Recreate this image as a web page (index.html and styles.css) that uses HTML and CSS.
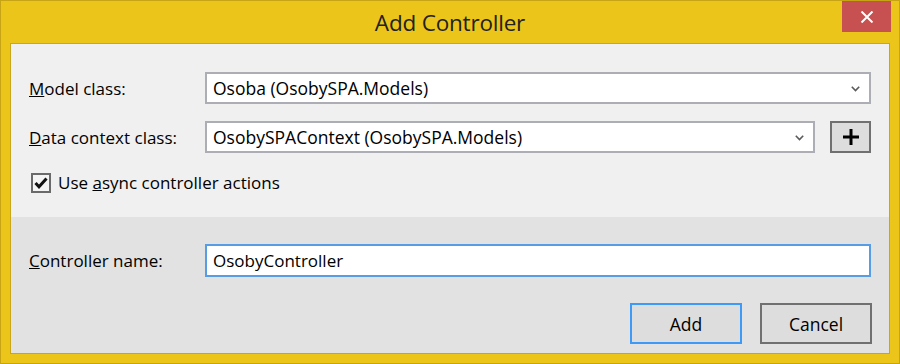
FILE: index.html
```html
<!DOCTYPE html>
<html lang="en">
<head>
    <meta charset="UTF-8">
    <title>Add Controller</title>
    <link rel="stylesheet" href="styles.css">
</head>
<body>
    <div class="window">
        <div class="titlebar">
            <span></span>
            <h1 class="title">Add Controller</h1>
            <button class="close" title="Close">
                <svg width="14" height="12" viewBox="0 0 14 12">
                    <path d="M1.5 0.5 L12.5 11.5 M12.5 0.5 L1.5 11.5" stroke="#fff" stroke-width="2" fill="none"/>
                </svg>
            </button>
        </div>
        <div class="content">
            <section class="options">
                <div class="row">
                    <label class="label"><u>M</u>odel class:</label>
                    <div class="combo combo-wide">
                        <span>Osoba (OsobySPA.Models)</span>
                        <svg class="chevron" width="9" height="6" viewBox="0 0 9 6">
                            <path d="M0.8 0.8 L4.5 4.5 L8.2 0.8" stroke="#5a5a5a" stroke-width="1.6" fill="none"/>
                        </svg>
                    </div>
                </div>
                <div class="row">
                    <label class="label"><u>D</u>ata context class:</label>
                    <div class="combo">
                        <span>OsobySPAContext (OsobySPA.Models)</span>
                        <svg class="chevron" width="9" height="6" viewBox="0 0 9 6">
                            <path d="M0.8 0.8 L4.5 4.5 L8.2 0.8" stroke="#5a5a5a" stroke-width="1.6" fill="none"/>
                        </svg>
                    </div>
                    <button class="plus" title="New data context">
                        <svg width="16" height="16" viewBox="0 0 16 16">
                            <path d="M8 0 V16 M0 8 H16" stroke="#000" stroke-width="3" fill="none"/>
                        </svg>
                    </button>
                </div>
                <label class="check">
                    <span class="box">
                        <svg width="14" height="12" viewBox="0 0 14 12">
                            <path d="M1.5 6 L5 9.8 L12.5 1.5" stroke="#111" stroke-width="3" fill="none"/>
                        </svg>
                    </span>
                    <span>Use <u>a</u>sync controller actions</span>
                </label>
            </section>
            <section class="naming">
                <div class="row">
                    <label class="label" for="controllerName"><u>C</u>ontroller name:</label>
                    <input type="text" id="controllerName" class="name-input" value="OsobyController">
                </div>
                <div class="actions">
                    <button class="btn btn-default">Add</button>
                    <button class="btn">Cancel</button>
                </div>
            </section>
        </div>
    </div>
</body>
</html>
```

FILE: styles.css
```css
body {
    margin: 0;
    font-family: 'Open Sans', 'Noto Sans', sans-serif;
    background-color: #ecc51a;
}
.window {
    width: 900px;
    height: 364px;
    box-sizing: border-box;
    border: 1px solid #c6a416;
    background-color: #ecc51a;
    display: flex;
    flex-direction: column;
}
.titlebar {
    height: 42px;
    display: grid;
    grid-template-columns: 1fr auto 1fr;
    flex-shrink: 0;
}
.title {
    margin: 0;
    font-size: 22.5px;
    font-weight: normal;
    color: #222;
    line-height: 44px;
    letter-spacing: -0.2px;
}
.close {
    justify-self: end;
    align-self: start;
    width: 49px;
    height: 31px;
    margin-right: 8px;
    border: none;
    padding: 0;
    background-color: #c75050;
    display: flex;
    align-items: center;
    justify-content: center;
}
.content {
    flex: 1;
    margin: 0 9px 9px;
    border: 1px solid #c9a71c;
    display: flex;
    flex-direction: column;
}
.options {
    height: 173px;
    box-sizing: border-box;
    padding: 28px 17px 0 18px;
    background-color: #f0f0f0;
    display: flex;
    flex-direction: column;
    gap: 17px;
}
.naming {
    flex: 1;
    padding: 27px 17px 0 18px;
    background-color: #e2e2e2;
}
.row {
    display: flex;
    align-items: center;
}
.label {
    flex: 0 0 176px;
    font-size: 17px;
    color: #000;
}
.combo {
    width: 610px;
    height: 32px;
    box-sizing: border-box;
    border: 2px solid #adadb5;
    background-color: #fff;
    padding: 0 9px 0 6px;
    display: flex;
    align-items: center;
    justify-content: space-between;
    font-size: 17.5px;
    color: #000;
}
.combo-wide {
    width: 666px;
}
.chevron {
    margin-top: 1px;
}
.plus {
    width: 41px;
    height: 32px;
    margin-left: 15px;
    box-sizing: border-box;
    border: 2px solid #707070;
    background-color: #dddddd;
    padding: 0;
    display: flex;
    align-items: center;
    justify-content: center;
}
.check {
    display: flex;
    align-items: center;
    gap: 7px;
    margin-top: 1px;
    padding-left: 2px;
    font-size: 17px;
    color: #000;
}
.box {
    width: 20px;
    height: 20px;
    box-sizing: border-box;
    border: 2px solid #6a6a6a;
    background-color: #f4f4f4;
    display: flex;
    align-items: center;
    justify-content: center;
}
.name-input {
    width: 666px;
    height: 33px;
    box-sizing: border-box;
    border: 2px solid #569de5;
    outline: none;
    padding: 0 6px;
    font-family: inherit;
    font-size: 17px;
    color: #000;
    background-color: #fff;
}
.actions {
    display: flex;
    justify-content: flex-end;
    gap: 18px;
    margin-top: 26px;
}
.btn {
    width: 112px;
    height: 41px;
    box-sizing: border-box;
    border: 2px solid #707070;
    background-color: #dddddd;
    font-family: inherit;
    font-size: 17.5px;
    color: #000;
    padding: 0;
}
.btn-default {
    border-color: #3d9bf7;
}
```
